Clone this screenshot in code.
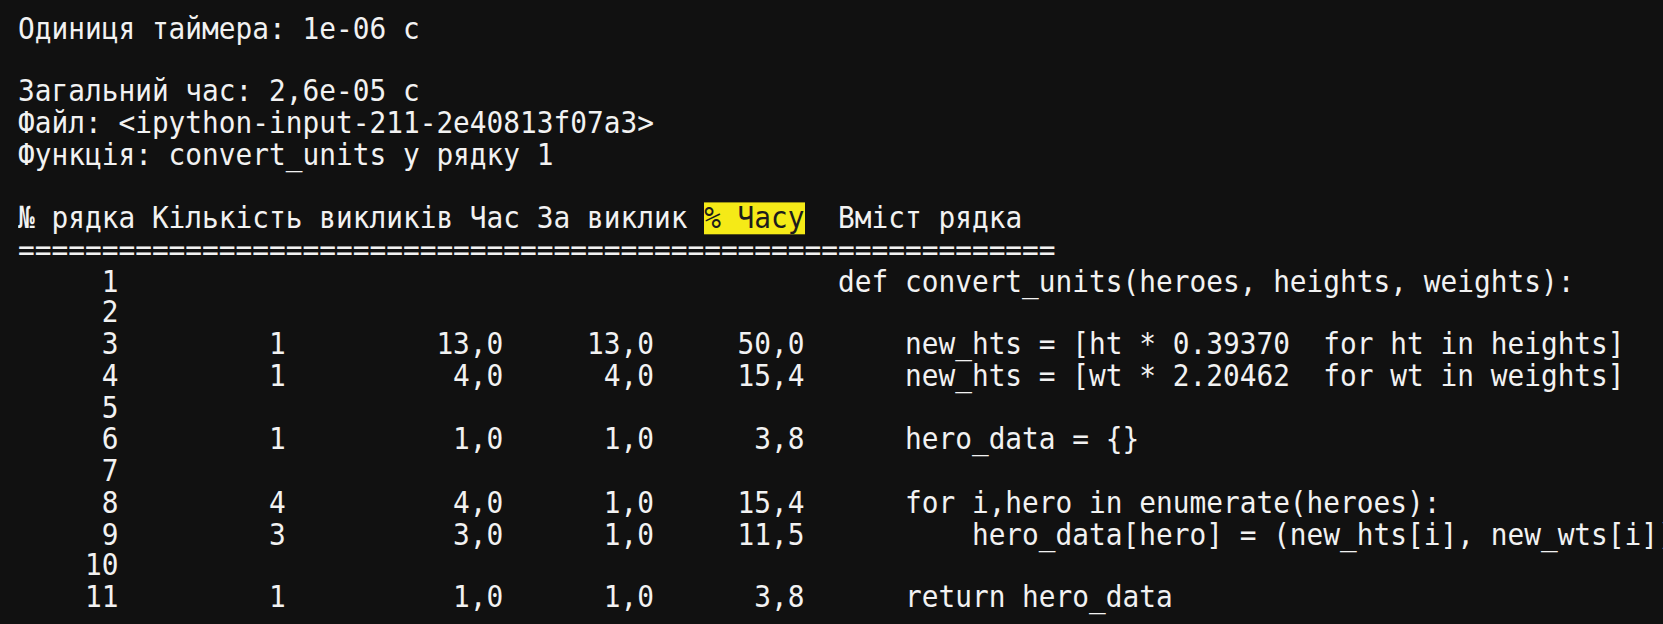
const pad = (v: string, n: number) => v.padStart(n, " ");

type Row = {
  line: number;
  hits?: string;
  time?: string;
  perHit?: string;
  pct?: string;
  code: string;
};

const rows: Row[] = [
  { line: 1, code: "def convert_units(heroes, heights, weights):" },
  { line: 2, code: "" },
  { line: 3, hits: "1", time: "13,0", perHit: "13,0", pct: "50,0", code: "    new_hts = [ht * 0.39370  for ht in heights]" },
  { line: 4, hits: "1", time: "4,0", perHit: "4,0", pct: "15,4", code: "    new_hts = [wt * 2.20462  for wt in weights]" },
  { line: 5, code: "" },
  { line: 6, hits: "1", time: "1,0", perHit: "1,0", pct: "3,8", code: "    hero_data = {}" },
  { line: 7, code: "" },
  { line: 8, hits: "4", time: "4,0", perHit: "1,0", pct: "15,4", code: "    for i,hero in enumerate(heroes):" },
  { line: 9, hits: "3", time: "3,0", perHit: "1,0", pct: "11,5", code: "        hero_data[hero] = (new_hts[i], new_wts[i])" },
  { line: 10, code: "" },
  { line: 11, hits: "1", time: "1,0", perHit: "1,0", pct: "3,8", code: "    return hero_data" },
];

// same column widths as line_profiler: %6s %9s %12s %8s %8s  %s
const formatRow = (r: Row) =>
  pad(String(r.line), 6) +
  " " +
  pad(r.hits ?? "", 9) +
  " " +
  pad(r.time ?? "", 12) +
  " " +
  pad(r.perHit ?? "", 8) +
  " " +
  pad(r.pct ?? "", 8) +
  "  " +
  r.code;

const Line = ({ children }: { children?: React.ReactNode }) => (
  <div className="h-[28.73px] whitespace-pre">{children}</div>
);

const App = () => {
  return (
    <div className="w-[1663px] h-[624px] overflow-hidden bg-[#111111] text-[#f2f2f2]">
      <div className="origin-top-left scale-y-[1.1] pt-[12px] pl-[18px] font-['DejaVu_Sans_Mono',monospace] text-[27.8px] leading-[28.73px]">
        <Line>Одиниця таймера: 1e-06 с</Line>
        <Line />
        <Line>Загальний час: 2,6e-05 с</Line>
        <Line>Файл: &lt;ipython-input-211-2e40813f07a3&gt;</Line>
        <Line>Функція: convert_units у рядку 1</Line>
        <Line />
        <Line>
          {"№ рядка Кількість викликів Час За виклик "}
          <span className="inline-block bg-[#f5ea17] text-[#1c1c1c]">% Часу</span>
          {"  Вміст рядка"}
        </Line>
        <Line>{"=".repeat(62)}</Line>
        {rows.map((r) => (
          <Line key={r.line}>{formatRow(r)}</Line>
        ))}
      </div>
    </div>
  );
};

export default App;
